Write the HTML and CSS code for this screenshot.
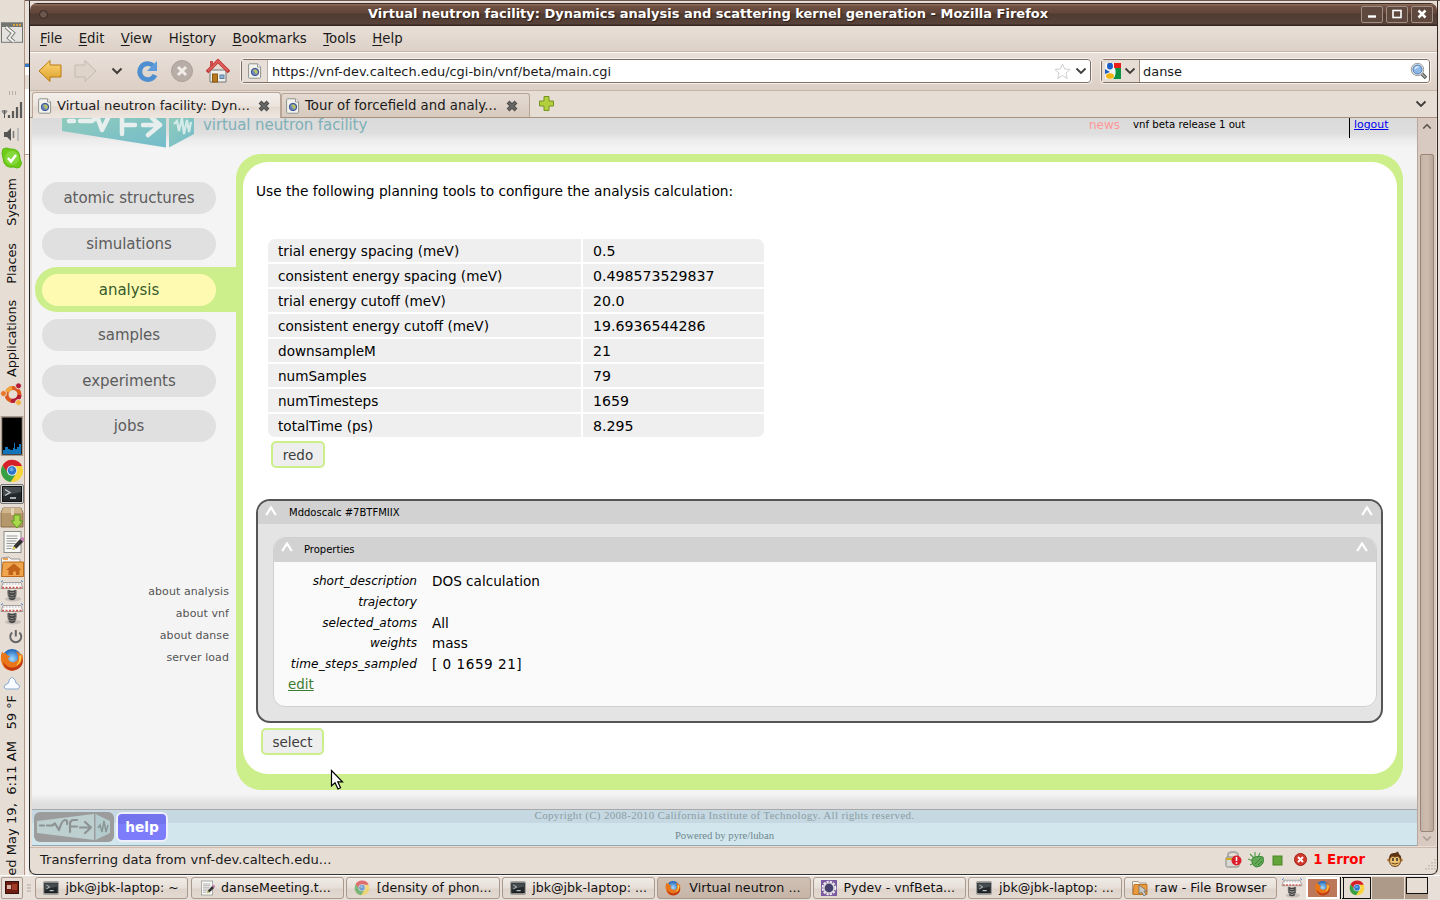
FILE: index.html
```html
<!DOCTYPE html>
<html lang="en">
<head>
<meta charset="utf-8">
<title>Virtual neutron facility</title>
<link rel="stylesheet" href="styles.css">
</head>
<body>
<svg class="defs" width="0" height="0">
  <defs>
    <linearGradient id="gold" x1="0" y1="0" x2="0" y2="1"><stop offset="0" stop-color="#ffd777"/><stop offset="1" stop-color="#dca02b"/></linearGradient>
    <linearGradient id="teal" x1="0" y1="0" x2="1" y2="1"><stop offset="0" stop-color="#8fcbbc"/><stop offset="1" stop-color="#74bccb"/></linearGradient>
    <radialGradient id="globe"><stop offset="0" stop-color="#a8dcff"/><stop offset="1" stop-color="#1560b8"/></radialGradient>
    <symbol id="chrome" viewBox="0 0 24 24">
      <circle cx="12" cy="12" r="11" fill="#f8d53a"/>
      <path d="M2.5 6.5A11 11 0 0 1 22 7H12L7.700 14.500Z" fill="#d6202a"/>
      <path d="M2.500 6.500A11 11 0 0 0 10.500 22.900L15.500 15.500L8 14Z" fill="#36a046"/>
      <circle cx="12" cy="11.500" r="5.200" fill="#d9e6f2"/><circle cx="12" cy="11.500" r="4.200" fill="#2f74c8"/><circle cx="11.500" cy="10.500" r="2" fill="#66a7e8"/>
    </symbol>
    <symbol id="firefox" viewBox="0 0 24 24">
      <circle cx="12" cy="11.500" r="10" fill="url(#globe)"/>
      <path d="M2 4C3 6 4 6 6 5C5 7 8 8 10 9L8 11C9 15 14 16 17 13C19 11 18 7 16 4C20 5 21 7 21 8L22 6C24 12 23 18 18 21C12 25 4 23 2 16C0 12 1 7 2 4Z" fill="#ea761a"/>
      <path d="M3 14C6 20 13 22 18 18C21 16 22 13 22 10C24 15 22 20 17 22C11 25 4 22 3 14Z" fill="#c33a12"/>
      <path d="M21 8C22 12 20 17 16 18C19 15 20 12 19 8Z" fill="#ffd54a"/>
    </symbol>
    <symbol id="term" viewBox="0 0 24 20">
      <rect x=".5" y=".5" width="23" height="19" rx="1.500" fill="#d3d5d2" stroke="#777"/>
      <rect x="2.500" y="2.500" width="19" height="15" fill="#22282b" stroke="#111"/>
      <path d="M3 3H21V8L3 12Z" fill="#454c50"/>
      <path d="M5 5.500L10 8.500L5 11.500" fill="none" stroke="#c6cdd0" stroke-width="1.300"/><path d="M10 14H16" stroke="#e4e8ea" stroke-width="1.400"/>
    </symbol>
    <symbol id="page" viewBox="0 0 14 16">
      <path d="M1.500 .8H9.500L12.600 4V14.200Q12.600 15.200 11.600 15.200H1.500Q.6 15.200 .6 14.200V1.800Q.6 .8 1.500 .8Z" fill="#f3f3ee" stroke="#8f938d"/>
      <path d="M9.500 .8V4H12.600" fill="#fff" stroke="#999"/>
      <circle cx="7" cy="9" r="3.700" fill="#6f85be" stroke="#3c5290"/><path d="M5 7L8 6.500L10 9L8 11.500L6.500 9Z" fill="#b9c45c"/>
    </symbol>
    <symbol id="note" viewBox="0 0 24 24">
      <rect x="3.500" y="1.500" width="17" height="21" fill="#f7f7f4" stroke="#8a8c87"/>
      <path d="M6 6H17M6 8.500H17M6 11H16M6 13.500H15M6 16H12M6 18.500H11" stroke="#999" stroke-width="1"/>
      <path d="M12 20L13 16L20 8.500L23 11.500L16 18.500Z" fill="#333"/><path d="M12 20L13 16L16 18.500Z" fill="#e6d36b"/><path d="M19.500 9L21.500 7Q25 8 23.500 10.800L22.500 12Z" fill="#c77fb5"/>
    </symbol>
    <symbol id="spring" viewBox="0 0 24 22">
      <ellipse cx="13" cy="19" rx="8" ry="2.500" fill="#c9c0ba"/>
      <path d="M3 2.500H21L23 8.500H1Z" fill="#faf8f6" stroke="#8d8d8d" stroke-width=".8"/>
      <path d="M3 4H21" stroke="#b3b3b3" stroke-dasharray="1.500 1.500"/><path d="M2 7.700H22" stroke="#d05a50" stroke-width="1.800" stroke-dasharray="2 1.500"/>
      <path d="M1 2L3 .5M21 .5L23 2" stroke="#3f7fc4"/>
      <path d="M8 10.500Q12 13 16 10.500M8 12.500Q12 16 16 12.500M8 15Q12 18.500 16 15M9 18Q12 20.500 15 18" fill="none" stroke="#444" stroke-width="1.800"/><path d="M8 10V14L10 19M16 10V14L15 18" fill="none" stroke="#666"/>
    </symbol>
    <symbol id="chev" viewBox="0 0 12 8"><path d="M1.500 1.500L6 6L10.500 1.500" fill="none" stroke="#403c38" stroke-width="1.800"/></symbol>
    <symbol id="up" viewBox="0 0 12 10"><path d="M1.200 9L6 1.500L10.800 9" fill="none" stroke="#fff" stroke-width="2.300"/></symbol>
    <symbol id="close" viewBox="0 0 14 14"><path d="M3 3L11 11M11 3L3 11" stroke="#4b4b49" stroke-width="4"/><path d="M3.500 3.500L10.500 10.500M10.500 3.500L3.500 10.500" stroke="#686866" stroke-width="2"/></symbol>
  </defs>
</svg>
<div class="desktop">
  <aside class="dock">
    <svg width="24" height="22" viewBox="0 0 24 22"><rect x="1.500" y=".8" width="21" height="19.500" fill="#e5e3df" stroke="#737572"/><path d="M2 1H22V5H2Z" fill="#72746f"/><path d="M13 2.800H21" stroke="#e2a63e" stroke-width="1.800" stroke-dasharray="2 1"/><path d="M6 5L13 11L9 16L14 20" fill="none" stroke="#7f817c" stroke-width="4"/><path d="M6 5L13 11L9 16L14 20" fill="none" stroke="#f2f1ee" stroke-width="2"/></svg>
    <svg width="24" height="6"><path d="M9.500 1V5M12.500 1V5M15.500 1V5" stroke="#bcaea3"/></svg>
    <svg width="24" height="18"><path d="M2 10.500L4.500 13L7 10.500M4.500 9V17M2 10H7" fill="none" stroke="#555"/><path d="M9 14V17M13 10V17M17 6V17M21 1V17" stroke="#5a5a58" stroke-width="2.200"/></svg>
    <svg width="24" height="17"><path d="M4 6H7L11 2V15L7 11H4Z" fill="#555"/><path d="M13.500 5V12" stroke="#777" stroke-width="1.500"/><path d="M18 2V15" stroke="#bbb" stroke-width="2"/></svg>
    <svg width="24" height="24"><path d="M3 2Q7 0 10 2Q20 1 20 12Q23 16 20 20Q17 22 14 20Q4 22 3 11Q1 6 3 2Z" fill="#70cb18" stroke="#58b90f"/><circle cx="12" cy="11" r="7" fill="#86d93a"/><path d="M8 11L11 14.500L16 8" fill="none" stroke="#fff" stroke-width="2.600"/></svg>
    <span class="vt">System</span>
    <span class="vt">Places</span>
    <span class="vt apps">Applications</span>
    <svg width="24" height="23" viewBox="0 0 24 23"><circle cx="13" cy="11.500" r="6.500" fill="none" stroke="#dd5a1c" stroke-width="4"/><path d="M7 9A6.500 6.500 0 0 1 12 5" fill="none" stroke="#f1a43c" stroke-width="4"/><path d="M19.500 12A6.500 6.500 0 0 1 11 17.500" fill="none" stroke="#b31b34" stroke-width="4"/><g stroke="#e6ddd5"><circle cx="3.500" cy="10.500" r="3" fill="#ec7628"/><circle cx="18.500" cy="2.800" r="3" fill="#b31b34"/><circle cx="18.500" cy="19.500" r="3" fill="#f4b13e"/></g></svg>
    <svg width="24" height="40"><rect x="1.500" y=".8" width="21" height="38.500" fill="#000" stroke="#a99a8d" stroke-width="1.500"/><path d="M3 38V34H5V31H8V33H10V34H13V32H14V27H15V33H17V31H19V28H21V38Z" fill="#1274ba"/></svg>
    <svg width="24" height="24"><use href="#chrome"/></svg>
    <svg width="24" height="20"><use href="#term"/></svg>
    <svg width="24" height="23" viewBox="0 0 24 23"><path d="M3 1H21L23 6V20H1V6Z" fill="#b6976b" stroke="#8c6f48"/><path d="M3 1H21L22.500 6H1.500Z" fill="#d0b68e"/><path d="M11 1H14V8H11Z" fill="#e5d4b4"/><path d="M14 8H20V14H23L17 21L11 14H14Z" fill="#a8d84b" stroke="#5d9a1d"/></svg>
    <svg width="25" height="24"><use href="#note"/></svg>
    <svg width="24" height="22"><path d="M1.500 20V2L9 1L11 3H20V20Z" fill="#f7f5f1" stroke="#999"/><path d="M3 3H8" stroke="#e68a2a" stroke-width="1.500"/><path d="M3 6H23.500V20.500H1.500Z" fill="#f0a44c" stroke="#bb6a1c"/><path d="M14 7.500L21.500 14H19.500V19H16V15.500H13V19H8.500V14H6Z" fill="#c2641a"/></svg>
    <svg width="24" height="22"><use href="#spring"/></svg>
    <svg width="24" height="22"><use href="#spring"/></svg>
    <svg width="24" height="16"><path d="M12.200 3.500A5.500 5.500 0 1 0 19.300 3.500" fill="none" stroke="#666" stroke-width="1.900"/><path d="M15.800 1V7.500" stroke="#666" stroke-width="2"/></svg>
    <svg width="24" height="25"><use href="#firefox"/></svg>
    <svg width="24" height="15"><path d="M6 13H18Q21 11 18.500 8.500Q16.500 7.500 16 7Q15 2 11.500 1.500Q8.500 3 8.500 7L5 9Q2.500 12 6 13Z" fill="#f8fbff" stroke="#86a9d0"/></svg>
    <span class="vt temp">59 °F</span>
    <span class="vt date">Wed May 19, &nbsp;6:11 AM</span>
  </aside>
  <div class="behind-l"><i></i><b></b></div>

  <main class="window">
    <header class="titlebar">
      <i class="knob"></i>
      <span class="wtitle">Virtual neutron facility: Dynamics analysis and scattering kernel generation - Mozilla Firefox</span>
      <div class="wbtns">
        <svg width="22" height="17"><rect class="wb" x=".5" y=".5" width="21" height="16" rx="1.500"/><path d="M7 10.500H15" stroke="#fff" stroke-width="2.400"/></svg>
        <svg width="22" height="17"><rect class="wb" x=".5" y=".5" width="21" height="16" rx="1.500"/><rect x="7" y="4.500" width="8" height="7" fill="none" stroke="#fff" stroke-width="1.600"/></svg>
        <svg width="22" height="17"><rect class="wb" x=".5" y=".5" width="21" height="16" rx="1.500"/><path d="M7.500 4.500L14.500 11.500M14.500 4.500L7.500 11.500" stroke="#fff" stroke-width="2.500"/></svg>
      </div>
    </header>
    <nav class="menubar"><span><u>F</u>ile</span><span><u>E</u>dit</span><span><u>V</u>iew</span><span>Hi<u>s</u>tory</span><span><u>B</u>ookmarks</span><span><u>T</u>ools</span><span><u>H</u>elp</span></nav>
    <div class="toolbar">
      <svg width="166" height="28" viewBox="0 0 166 28">
        <path d="M2 14L13 3.500V8H24V20H13V24.500Z" fill="url(#gold)" stroke="#b97b12"/>
        <path d="M59 14L48 3.500V8H38V20H48V24.500Z" fill="#dfd4ca" stroke="#c5b9af"/>
        <path d="M75.500 11.500L80 16L84.500 11.500" fill="none" stroke="#403c38" stroke-width="2"/>
        <path d="M116 8.500A8 8 0 1 0 118 18" fill="none" stroke="#4f8fd0" stroke-width="4.800"/><path d="M120 4V14H110Z" fill="#5d9bdb"/>
        <circle cx="145" cy="14" r="10.500" fill="#b9aea7" stroke="#aaa098"/><path d="M141 10L149 18M149 10L141 18" stroke="#f1ece8" stroke-width="3"/>
      </svg>
      <svg class="home" width="24" height="26" viewBox="0 0 24 26"><path d="M4 12H20V24H4Z" fill="#eeeeec" stroke="#777"/><path d="M4 3H7V10H4Z" fill="#c9504f"/><path d="M1 14L12 3L23 14" fill="none" stroke="#b73333" stroke-width="3.500"/><path d="M2 13L12 3L22 13" fill="none" stroke="#e05c58" stroke-width="2"/><rect x="6.500" y="16" width="5" height="8" fill="#b77a1f" stroke="#8c5712"/><rect x="14" y="17" width="4" height="3.500" fill="#8eb2d6" stroke="#637f9d"/></svg>
      <div class="field url">
        <span class="idbox"><svg width="14" height="16"><use href="#page"/></svg></span>
        <span class="ftext">https://vnf-dev.caltech.edu/cgi-bin/vnf/beta/main.cgi</span>
        <svg class="star" width="17" height="17"><path d="M8.500 1L10.700 6L16 6.500L12 10L13.200 15.500L8.500 12.500L3.800 15.500L5 10L1 6.500L6.300 6Z" fill="#fff" stroke="#cfcfcf"/></svg>
        <svg class="ucv" width="12" height="8"><use href="#chev"/></svg>
      </div>
      <div class="field search">
        <span class="engine"><svg width="16" height="16"><rect width="16" height="16" fill="#f5f5f5"/><path d="M9 0H16V5H9Z" fill="#ea1c1c"/><path d="M10 5H16V16H8Q12 12 10 5Z" fill="#0b9343"/><ellipse cx="5" cy="3" rx="3" ry="3.500" fill="#1c5fc2"/><path d="M0 6L5 9L0 11Z" fill="#1c5fc2"/><ellipse cx="5" cy="13" rx="4" ry="2.800" fill="#f4b410"/></svg><svg width="12" height="8"><use href="#chev"/></svg></span>
        <span class="ftext">danse</span>
        <svg class="mag" width="18" height="18"><path d="M10 10L16 16" stroke="#555" stroke-width="3.500"/><path d="M11 11L15.500 15.500" stroke="#aaa" stroke-width="1.500"/><circle cx="7.500" cy="7.500" r="6.200" fill="#eee" stroke="#999"/><circle cx="7.500" cy="7.500" r="4.500" fill="#8fb9e8" stroke="#4b79b3"/><path d="M5 7Q6 4.500 8.500 4.700" fill="none" stroke="#e5f1fd" stroke-width="1.500"/></svg>
      </div>
    </div>
    <div class="tabs">
      <div class="tab on"><svg width="14" height="16"><use href="#page"/></svg><span>Virtual neutron facility: Dyn...</span><svg width="14" height="14"><use href="#close"/></svg></div>
      <div class="tab off"><svg width="14" height="16"><use href="#page"/></svg><span>Tour of forcefield and analy...</span><svg width="14" height="14"><use href="#close"/></svg></div>
      <svg class="plus" width="18" height="18"><path d="M6 1.500H11V6H15.500V11H11V15.500H6V11H1.500V6H6Z" fill="#b3cf3e" stroke="#74941c"/></svg>
      <svg class="tabdown" width="12" height="8"><use href="#chev"/></svg>
    </div>

    <div class="view">
      <section class="page">
        <div class="banner">
          <svg class="logo" width="134" height="30" viewBox="0 0 134 30"><path d="M0 0H104V29.500L0 13Z" fill="url(#teal)"/><path d="M107 0H132V16L107 29.500Z" fill="url(#teal)"/><g fill="none" stroke="#e7efee" stroke-width="4.500" stroke-linecap="round" stroke-linejoin="round"><path d="M7 3H12M18 3H30L34 0M36 1L40 12L46 0"/><path d="M60 0V16M60 7H73M81 7H98M90 0L98 7L86 17"/></g><path d="M112 6L115 3L117 13L120 0L122 16L125 2L127 14L129 4" fill="none" stroke="#d5ebea" stroke-width="2.200"/></svg>
          <span class="brand">virtual neutron facility</span>
          <span class="news">news</span>
          <span class="release">vnf beta release 1 out</span>
          <span class="logout"><a>logout</a></span>
        </div>
        <div class="cols">
          <aside class="side">
            <ul class="nav">
              <li><span>atomic structures</span></li>
              <li><span>simulations</span></li>
              <li class="active"><span>analysis</span></li>
              <li><span>samples</span></li>
              <li><span>experiments</span></li>
              <li><span>jobs</span></li>
            </ul>
            <div class="about"><span>about analysis</span><span>about vnf</span><span>about danse</span><span>server load</span></div>
          </aside>
          <div class="frame">
            <div class="sheet">
              <p class="intro">Use the following planning tools to configure the analysis calculation:</p>
              <div class="grid">
                <span>trial energy spacing (meV)</span><span class="num">0.5</span>
                <span>consistent energy spacing (meV)</span><span class="num">0.498573529837</span>
                <span>trial energy cutoff (meV)</span><span class="num">20.0</span>
                <span>consistent energy cutoff (meV)</span><span class="num">19.6936544286</span>
                <span>downsampleM</span><span class="num">21</span>
                <span>numSamples</span><span class="num">79</span>
                <span>numTimesteps</span><span class="num">1659</span>
                <span>totalTime (ps)</span><span class="num">8.295</span>
              </div>
              <span class="btn redo">redo</span>
              <div class="doc">
                <div class="dhead"><svg width="12" height="10"><use href="#up"/></svg><span>Mddoscalc #7BTFMIIX</span><svg width="12" height="10"><use href="#up"/></svg></div>
                <div class="props">
                  <div class="phead"><svg width="12" height="10"><use href="#up"/></svg><span>Properties</span><svg width="12" height="10"><use href="#up"/></svg></div>
                  <div class="pbody">
                    <dl><dt>short_description</dt><dd>DOS calculation</dd><dt>trajectory</dt><dd></dd><dt>selected_atoms</dt><dd>All</dd><dt>weights</dt><dd>mass</dd><dt class="wide">time_steps_sampled</dt><dd class="steps">[ 0 1659 21]</dd></dl>
                    <a class="edit">edit</a>
                  </div>
                </div>
              </div>
              <span class="btn select">select</span>
            </div>
          </div>
        </div>
        <div class="fade"></div>
        <footer class="foot">
          <svg class="flogo" width="80" height="30"><rect width="80" height="30" rx="6" fill="#9c9c9c"/><path d="M3 9L60 2V28L3 21Z" fill="#bdcfcf"/><path d="M61.500 2L76 9V21L61.500 28Z" fill="#b4cccd"/><g fill="none" stroke="#8d9292" stroke-width="2.200" stroke-linecap="round" stroke-linejoin="round"><path d="M6 13.500H10M13 13.500H18L21 11.500L25 18Q28 8 31 8Q34 8 33 12M36 20V12Q36 8 40 8H43M36 14.500H43M46 15.500H57M51 10L57 15.500L51 21"/></g><path d="M64 16L66 13L68 20L70 9L72 20L74 13" fill="none" stroke="#8b9696" stroke-width="1.500"/></svg>
          <span class="help">help</span>
          <div class="copy"><span class="c1">Copyright (C) 2008-2010 California Institute of Technology. All rights reserved.</span><span class="c2">Powered by pyre/luban</span></div>
        </footer>
      </section>
      <div class="scroll">
        <svg width="10" height="7" viewBox="0 0 12 8"><path d="M1.500 6.500L6 2L10.500 6.500" fill="none" stroke="#564e48" stroke-width="1.800"/></svg>
        <i></i>
        <svg width="10" height="7" viewBox="0 0 12 8"><path d="M1.500 1.500L6 6L10.500 1.500" fill="none" stroke="#a79b92" stroke-width="1.800"/></svg>
      </div>
    </div>
    <div class="status">
      <span class="st">Transferring data from vnf-dev.caltech.edu...</span>
      <svg width="64" height="18" viewBox="0 0 64 18"><path d="M3 8V4Q3 1 8 1Q13 1 13 4V8" fill="none" stroke="#aaa" stroke-width="2"/><rect x="1" y="6" width="13" height="10" rx="1.500" fill="#d8d8d4" stroke="#83857f"/><path d="M1 8H8" stroke="#d0ad20" stroke-width="2"/><circle cx="11.500" cy="9.500" r="5" fill="#dc1e2b"/><path d="M11.500 6V10M11.500 11.300V12.800" stroke="#fff" stroke-width="1.600"/><g stroke="#4c9b44" stroke-width="1.100"><path d="M25 3L30 8M30 1V7M35 2L32 8M23 8L28 10M25 14L29 12"/></g><path d="M27 8Q31 4 38 6Q39 8 38 12Q36 16 31 16Q27 14 27 11Z" fill="#63a955" stroke="#3a8537"/><path d="M30 13L36 7M33 14L37 10" stroke="#3a8537"/><rect x="48" y="5" width="9" height="9" fill="#62a33a" stroke="#4a8527"/></svg>
      <svg width="13" height="13"><circle cx="6.500" cy="6.500" r="6" fill="#d0392b" stroke="#a32017"/><path d="M4 4L9 9M9 4L4 9" stroke="#fff" stroke-width="2"/></svg>
      <b class="err">1 Error</b>
      <svg width="16" height="17"><path d="M2 8Q2 1 8 2L11 .5L12 3Q15 5 14 9Z" fill="#5c3515"/><circle cx="1.800" cy="9" r="1.600" fill="#b3732f"/><circle cx="14.200" cy="9" r="1.600" fill="#b3732f"/><path d="M3 7Q5 4 8 6Q11 4 13 7Q15 15 8 15.500Q1 15 3 7Z" fill="#f0c472" stroke="#68401a"/><path d="M6 7V10M10 7V10" stroke="#222" stroke-width="1.400"/><path d="M4.500 12Q8 14 11.500 12" fill="none" stroke="#68401a"/></svg>
      <svg class="grip" width="12" height="12"><path d="M10 1V12M7 4V12M4 7V12M1 10V12" stroke="#b9aaa0" stroke-width="1.200" stroke-dasharray="1.500 1.500"/></svg>
    </div>
  </main>
  <div class="behind-r"></div>

  <footer class="taskbar">
    <span class="desk"><svg width="14" height="13"><rect x=".5" y=".5" width="13" height="12" fill="#6f1d12" stroke="#35110c"/><path d="M2 4H6V8H2Z" fill="#d9b4a8"/><path d="M7 3H12V9H7Z" fill="#a13a26"/></svg></span>
    <svg class="tgrip" width="5" height="8"><path d="M0 1H4M0 4H4M0 7H4" stroke="#b5a79c"/></svg>
    <div class="tasks">
      <span class="task"><svg width="16" height="14"><use href="#term"/></svg><em>jbk@jbk-laptop: ~</em></span>
      <span class="task"><svg width="16" height="16"><use href="#note"/></svg><em>danseMeeting.t...</em></span>
      <span class="task dim"><svg width="16" height="16"><use href="#chrome"/></svg><em>[density of phon...</em></span>
      <span class="task"><svg width="16" height="14"><use href="#term"/></svg><em>jbk@jbk-laptop: ...</em></span>
      <span class="task cur"><svg width="16" height="16"><use href="#firefox"/></svg><em>Virtual neutron ...</em></span>
      <span class="task"><svg width="16" height="16"><rect width="16" height="16" fill="#7c5aa0"/><circle cx="8" cy="8" r="6.300" fill="none" stroke="#eee" stroke-width="2" stroke-dasharray="2.300 1"/><circle cx="8" cy="8" r="5" fill="#48406c" stroke="#ddd" stroke-width="1.200"/></svg><em>Pydev - vnfBeta...</em></span>
      <span class="task"><svg width="16" height="14"><use href="#term"/></svg><em>jbk@jbk-laptop: ...</em></span>
      <span class="task"><svg width="16" height="16"><path d="M.5 14V1.500H6L8 3H14V14Z" fill="#f4f1ec" stroke="#aa9a8a"/><path d="M2 4.500H15V14.500H1Z" fill="#e89a3c" stroke="#c07622"/><path d="M7 5V14L9.500 12L12 16L14 14.500L12 11H15Z" fill="#c8c8c4" stroke="#666" stroke-width=".7"/></svg><em>raw - File Browser</em></span>
    </div>
    <svg class="tspring" width="22" height="20"><use href="#spring"/></svg>
    <div class="pager"><span class="p1"><svg width="17" height="16"><use href="#firefox"/></svg></span><span class="p2"><svg width="16" height="16"><use href="#chrome"/></svg></span><span class="p3"></span><span class="p4"><i></i></span></div>
  </footer>
  <svg class="cursor" width="14" height="22"><path d="M1.500 1.500V17L5 13.800L8 20L10.500 18.800L7.800 12.800H12.500Z" fill="#fff" stroke="#000" stroke-width="1.200"/></svg>
</div>
</body>
</html>
```

FILE: styles.css
```css
* { box-sizing: border-box; }
body { margin: 0; width: 1440px; height: 900px; overflow: hidden; font-family: "DejaVu Sans", sans-serif; font-size: 13.33px; color: #1a1a1a; }
svg { display: block; flex: none; }
.defs { position: absolute; }
.desktop { position: relative; width: 1440px; height: 900px; display: grid; grid-template: 875px 25px / 25px 4px 1409px 2px; background: #e6ddd5; white-space: nowrap; }

/* left panel */
.dock { display: grid; grid-template-rows: 68px 11px 25px 21px 31px 65px 57px 83px 33px 43px 25px 23px 23px 26px 24px 23px 26px 18px 29px 19px 46px 134px; align-items: start; padding-top: 22px; height: 875px; border-right: 1px solid #b09484; background: #e6ddd5; overflow: hidden; }
.vt { writing-mode: vertical-rl; transform: rotate(180deg); width: 24px; line-height: 23px; font-size: 12.8px; color: #111; text-align: right; justify-self: start; }
.apps { letter-spacing: -.1px; }
.date { height: max-content; font-size: 13.1px; }
.behind-l { background: #f4efea; border-top: 1px solid #6c5b52; display: flex; flex-direction: column; }
.behind-l i { height: 63px; background: #e9e1da; border-bottom: 1px solid #b9a090; }
.behind-l b { height: 91px; border-bottom: 1px solid #b9a090; background: linear-gradient(#3478c8 0 3px, #fff 3px 11px, #e6ddd5 11px 25px, #fff 25px); }
.behind-r { border-top: 1px solid #6c5b52; background: #e9e1da; }

/* window chrome */
.window { border-top: 1px solid #6c5b52; padding-top: 2px; display: flex; flex-direction: column; background: #e6ddd5; height: 875px; width: 1409px; border-left: 1px solid #222; border-right: 1px solid #33251f; border-bottom: 1px solid #333; border-radius: 0 0 7px 7px; }
.titlebar { flex: none; height: 23px; display: flex; align-items: center; background: linear-gradient(#3a2b25 0 1px, #8b6a5a 1px 2px, #6f5042 3px, #624639 10px, #503b32 11px, #58433a 21px, #33251f 22px); border-radius: 7px 7px 0 0; }
.knob { width: 9px; height: 9px; margin-left: 9px; border: 1px solid #342722; border-radius: 50%; background: #6c564c; }
.wtitle { margin-left: 320px; width: 684px; line-height: 16px; padding-bottom: 1px; font-weight: bold; font-size: 13px; color: #fff; text-shadow: 1px 1px 1px #2a1d18; }
.wbtns { display: flex; gap: 3px; margin-left: auto; margin-right: 4px; }
.wb { fill: #5f493f; stroke: #a18d82; }
.menubar { flex: none; height: 26px; display: flex; align-items: center; gap: 16.4px; padding-left: 10px; border-bottom: 1px solid #c9b8aa; background: linear-gradient(#e8dfd7, #ddd1c7); font-size: 13.3px; }
.menubar u { text-underline-offset: 2px; }
.toolbar { flex: none; height: 39px; display: flex; align-items: center; padding: 0 0 1px 7px; border-top: 1px solid #fbf8f5; border-bottom: 1px solid #c9b5a7; background: linear-gradient(#e8dfd8, #dccfc5); }
.home { margin-left: 3px; }
.field { height: 24px; background: #fff; border: 1px solid #806e62; border-radius: 3px; outline: 1px solid #f6f1ed; display: flex; align-items: center; }
.url { width: 850px; margin-left: 11px; }
.idbox { width: 26px; height: 22px; display: grid; place-items: center; background: #e8dfd8; border-right: 1px solid #bcaea3; }
.ftext { margin-left: 4px; font-size: 12.95px; flex: 1; }
.star { margin-right: 4px; }
.ucv { margin-right: 3px; }
.search { width: 329px; margin-left: 10px; }
.search .ftext { margin-left: 3px; }
.engine { width: 38px; height: 22px; display: flex; align-items: center; gap: 3px; padding-left: 3px; background: #e6ddd5; border-right: 1px solid #9c8b7f; }
.mag { margin-right: 1px; }
.tabs { flex: none; height: 27px; display: flex; align-items: end; padding-left: 2px; border-bottom: 1px solid #a8917f; background: #e6ddd5; }
.tab { display: flex; align-items: center; height: 26px; border: 1px solid #b8a596; border-bottom: 0; border-radius: 3px 3px 0 0; padding-left: 5px; }
.tab span { flex: 1; margin-left: 5px; font-size: 13.15px; }
.on { width: 249px; background: linear-gradient(#f4efeb, #ece4dd 13px, #e4dad1 14px, #eee6e0); padding-right: 9px; margin-bottom: -1px; }
.off { width: 249px; height: 24px; padding-right: 10px; padding-left: 4px; background: linear-gradient(#e4dad2, #d7cabe); }
.off span { font-size: 13.3px; }
.plus { margin: 0 0 4px 8px; }
.tabdown { margin: 0 10px 9px auto; }

/* page area */
.view { flex: none; height: 728px; margin-left: 2px; display: grid; grid-template-columns: 1385px 19px; }
.page { background: #f4f4f4; height: 728px; overflow: hidden; color: #000; }
.banner { height: 36px; display: flex; align-items: flex-start; background: linear-gradient(#dadada, #dedede 15px, #ececec 22px, #f2f2f2 29px, #f4f4f4 30px); }
.logo { margin-left: 30px; }
.brand { margin-left: 7px; width: 886px; font-size: 15px; line-height: 15px; color: #7fb0b7; letter-spacing: -.08px; }
.news { width: 44px; font-size: 12px; line-height: 14px; color: #ff9797; }
.release { width: 216px; font-size: 10.2px; line-height: 13px; }
.logout { height: 20px; border-left: 1px solid #000; padding-left: 4px; font-size: 10.9px; line-height: 13px; }
.logout a { color: #0000ee; text-decoration: underline; }
.cols { display: grid; grid-template-columns: 204px 1167px; height: 636px; }
.side { padding-top: 28px; }
.nav { list-style: none; margin: 0 0 0 10px; padding: 0; display: grid; grid-template-rows: 46px 46px 45px 46px 45px 32px; }
.nav li { width: 174px; height: 32px; }
.nav span { display: block; height: 32px; border-radius: 16px; background: #e0e0e0; color: #5c5c5c; font-size: 15px; line-height: 33px; text-align: center; letter-spacing: -.05px; }
.nav .active { width: 202px; height: 45px; margin: -7px 0 0 -7px; padding: 7px 21px 6px 7px; background: #ccee8b; border-radius: 22px 0 0 22px; }
.nav .active span { background: #fffab2; color: #365a2b; }
.about { display: flex; flex-direction: column; margin-top: 139px; width: 197px; text-align: right; font-size: 11px; line-height: 22px; color: #555; letter-spacing: .07px; }
.frame { background: #ccee8b; border-radius: 25px; padding: 8px 6px 16px 7px; }
.sheet { background: #fff; border-radius: 25px; height: 612px; padding: 19px 14px 0 13px; }
.intro { margin: 0 0 38px; line-height: 20px; font-size: 13.73px; }
.grid { margin-left: 12px; width: 496px; display: grid; grid-template-columns: 313px 181px; gap: 2px; border-radius: 7px; overflow: hidden; font-size: 13.6px; }
.grid span { height: 23px; line-height: 24px; padding-left: 10px; background: #efefef; }
.grid .num { font-size: 14.15px; }
.btn { display: block; height: 27px; border: 2px solid #ccee8b; border-radius: 5px; background: #eee; color: #3c3c3c; line-height: 25px; text-align: center; font-size: 13.5px; }
.redo { width: 54px; margin: 4px 0 31px 15px; }
.select { width: 63px; margin: 5px 0 0 5px; }
.doc { height: 224px; border: 2px solid #555; border-radius: 14px; background: #e4e4e4; overflow: hidden; }
.dhead, .phead { display: flex; background: #d2d2d2; font-size: 10px; }
.dhead { height: 23px; padding: 5px 8px 0 7px; }
.dhead span { flex: 1; margin-left: 12px; line-height: 14px; }
.props { margin: 13px 4px 0 15px; width: 1104px; height: 170px; border-radius: 12px; overflow: hidden; border: 1px solid #d0d0d0; background: #fafafa; }
.phead { height: 24px; padding: 4px 8px 0 7px; }
.phead span { flex: 1; margin-left: 11px; line-height: 16px; }
.pbody { padding: 9px 0 0 14px; }
dl { margin: 0; display: grid; grid-template-columns: 129px auto; column-gap: 15px; grid-auto-rows: 20.75px; line-height: 21px; }
dt { text-align: right; font-style: italic; font-size: 12.1px; line-height: 20.5px; }
.wide { letter-spacing: .15px; }
dd { margin: 0; font-size: 13.6px; }
.steps { letter-spacing: .5px; }
.edit { display: block; line-height: 20px; color: #3b7d31; text-decoration: underline; font-size: 13.4px; }
.fade { height: 19px; background: linear-gradient(#f4f4f4 4px, #dedede 14px, #ddd); }
.foot { height: 37px; display: flex; align-items: flex-start; padding: 2px 0 0 2px; border-top: 1px solid #a7a9aa; border-bottom: 1px solid #8fa9b2; background: linear-gradient(#c6d9e2 0 13px, #d2e6ed 13px); position: relative; }
.help { width: 52px; height: 30px; margin-left: 2px; border: 2px solid #efeffb; border-radius: 6px; background: linear-gradient(#7373ed 0 10px, #7d7dfc 10px); color: #fff; font-weight: bold; font-size: 13.7px; line-height: 26px; text-align: center; }
.copy { position: absolute; left: 0; right: 0; top: -1px; display: grid; justify-items: center; font-family: "Liberation Serif", serif; color: #6f868e; }
.c1 { font-size: 11px; line-height: 12px; letter-spacing: .33px; color: #8a9da5; }
.c2 { font-size: 10.700px; line-height: 29px; }
.scroll { border-left: 1px solid #b9a698; background: #d8cac0; display: flex; flex-direction: column; align-items: center; padding: 5px 0 4px; }
.scroll i { width: 14px; flex: 1; margin: 24px 0 3px; border: 1px solid #9b8576; border-radius: 2px; background: linear-gradient(90deg, #c4b4a7, #cdbdb0 6px, #b8a698); }
.status { flex: 1; min-height: 0; display: flex; align-items: center; border-top: 1px solid #cfb9ac; margin-top: 1px; padding: 0 0 3px 10px; }
.st { width: 1187px; font-size: 13.1px; }
.status svg + svg { margin-left: 5px; }
.err { margin: 0 22px 0 6px; color: #f00; font-size: 13.3px; }
.status .grip { margin: 8px 0 0 22px; }

/* taskbar */
.taskbar { grid-column: 1 / -1; width: 1440px; height: 25px; display: flex; align-items: center; padding-bottom: 1px; background: #e8dfd8; border-top: 1px solid #fff; }
.desk { width: 22px; height: 22px; margin-left: 1px; border: 1px solid #ab9b8f; border-radius: 2px; display: grid; place-items: center; }
.tgrip { margin: 0 4px 0 4px; }
.tasks { display: grid; grid-template-columns: repeat(8, 153.4px); gap: 2.2px; margin-left: -1px; }
.task { height: 22px; display: flex; align-items: center; padding-left: 7px; border: 1px solid #aa998d; border-radius: 3px; background: linear-gradient(#f0ebe6, #e7dfd8 10px, #dfd4cb 11px, #e2d9d1); font-size: 12.6px; color: #111; }
.task em { font-style: normal; margin-left: 6.5px; }
.dim svg { opacity: .6; }
.cur { background: linear-gradient(#cfc0b4, #c6b5a7); }
.cur em { margin-left: 8px; font-size: 12.700px; }
.tspring { margin-left: 4px; }
.pager { display: grid; grid-template-columns: 33px 31px 32px 23px; height: 22px; margin-left: 3px; gap: 1px; }
.pager span { display: grid; place-items: center; }
.p1 { background: #bd785c; border: 2px solid #fff; }
.p2 { background: #e6ddd5; border: 1px solid #111; border-left: 4px double #111; }
.p3, .p4 { background: #ad9a89; }
.pager .p4 { place-items: start end; }
.p4 i { width: 22px; height: 17px; background: #e6ddd5; border: 1px solid #111; }
.cursor { position: absolute; left: 330px; top: 769px; }
```
